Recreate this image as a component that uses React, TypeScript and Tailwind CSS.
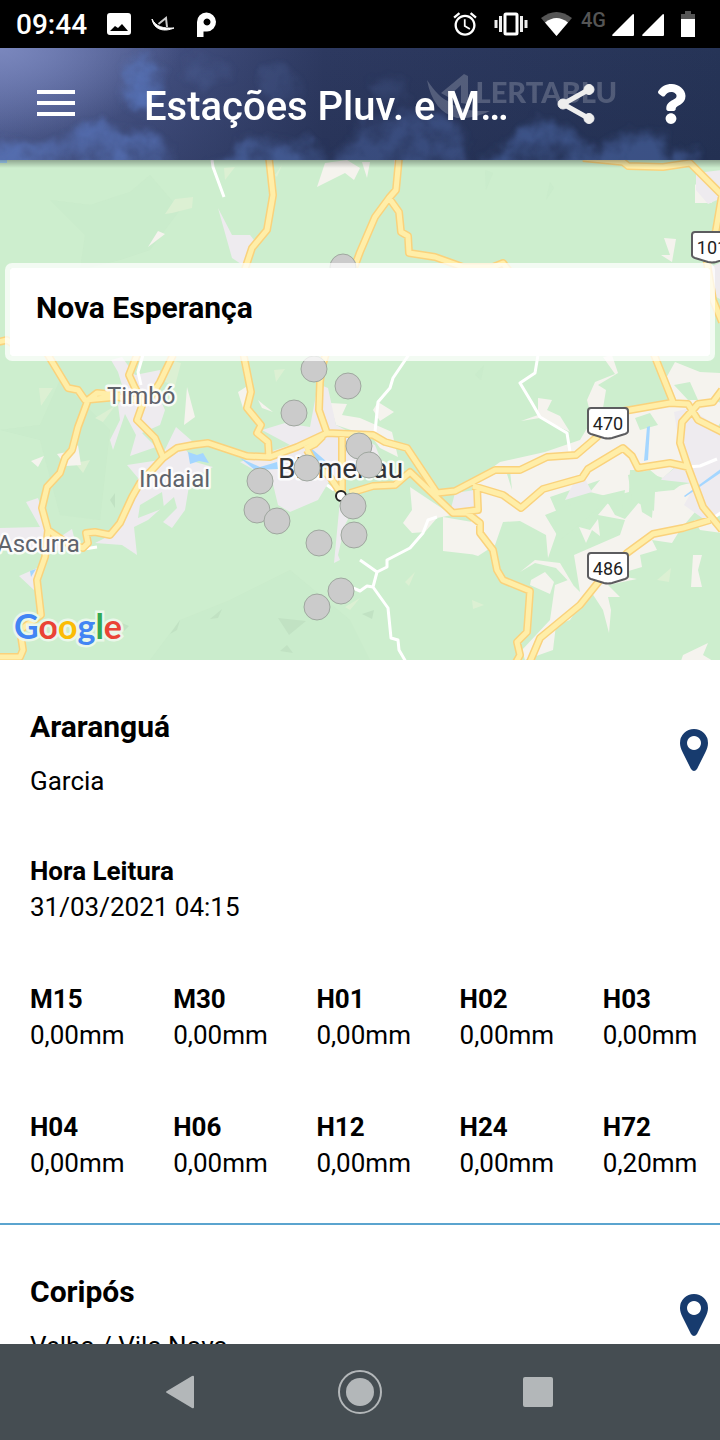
import { FaQuestion } from 'react-icons/fa'

interface Reading {
  label: string
  value: string
}

interface Station {
  name: string
  district: string
  readAt: string
  readings: Reading[]
}

const LABELS = ['M15', 'M30', 'H01', 'H02', 'H03', 'H04', 'H06', 'H12', 'H24', 'H72']

const STATIONS: Station[] = [
  {
    name: 'Araranguá',
    district: 'Garcia',
    readAt: '31/03/2021 04:15',
    readings: LABELS.map((label) => ({ label, value: label === 'H72' ? '0,20mm' : '0,00mm' })),
  },
  {
    name: 'Coripós',
    district: 'Velha / Vila Nova',
    readAt: '31/03/2021 04:15',
    readings: LABELS.map((label) => ({ label, value: '0,00mm' })),
  },
]

const MARKERS = [
  [343, 267], [314, 369], [348, 386], [294, 413], [359, 446],
  [369, 465], [307, 468], [260, 481], [257, 510], [277, 521],
  [353, 506], [354, 535], [319, 543], [341, 591], [317, 607],
]

const ROADS = [
  'M269 158 L273 195 L267 230 L252 248 L243 275 L241 340 L244 357 L251 392 L247 408 L261 425 L257 433 L268 442 L269 457',
  'M48 530 L67 543 L83 548 L88 543 L86 533 L95 532 L110 535 L120 523 L132 497 L140 483 L163 458 L177 448 L193 445 L208 443 L247 456 L270 457 L297 447 L327 433 L373 435 L385 442 L407 448 L437 493 L455 491 L495 470 L520 470 L547 457 L576 455 L597 437 L610 413 L630 410 L670 403 L688 404 L698 420 L722 432',
  'M655 357 L640 320 M655 357 L673 402',
  'M722 390 L713 402 L698 404 L682 422 L680 443 L688 467 L703 507 L722 530',
  'M473 486 L503 495 L521 508 L543 489 L582 478 L588 469 L623 448 L632 456 L638 468 L670 463 L688 467',
  'M477 487 L478 510 L453 513 L410 472 L395 485 L373 486 L350 493',
  'M453 513 L467 513 L480 523 L480 533 L493 550 L497 570 L503 580 L530 591 L527 632 L517 642 L520 655 L515 664',
  'M529 664 L540 638 L580 605 L600 580 L627 553 L653 534 L683 528 L710 520',
  'M307 450 L314 463 L330 477 L340 492 M342 433 L342 492 M323 436 L315 444 L305 449',
  'M399 158 L396 190 L389 198 L375 217 L360 252 L342 300 L322 367 L320 382 L319 410 L327 433',
  'M389 198 L399 212 L401 232 L408 236 L409 253 L435 257 L463 267 L493 267 L503 263 L512 275',
  'M583 158 L623 162 L628 166 L663 167 L690 163 L722 195 L716 230 L707 263 L713 300 L722 322',
  'M-2 342 L7 340 L25 352 L45 350 L68 388 L78 390 L85 400 L117 397 L143 401 M88 400 L97 393 L120 395',
  'M88 400 L78 427 L72 450 L65 458 L60 473 L47 487 L42 508 L48 530 L45 557 L37 580 L41 615 L20 630 L23 650 L20 657 L-2 657',
  'M137 355 L129 375 L135 388 L143 403 L137 420 L155 438 L163 457 M173 355 L160 382 L147 403',
].join(' ')

const LOCAL_ROADS = [
  'M212 160 L213 167 L224 197',
  'M412 350 L393 378 L390 388 L378 402 L375 432',
  'M538 355 L535 373 L520 383 L532 403 L540 417 L567 433 L570 452',
  'M437 517 L428 520 L423 533 L410 548 L387 560 L387 567 L377 572 L360 560',
  'M377 572 L373 587 L388 608 L391 638 L398 640 L399 650 L406 662 M373 587 L367 586 L360 591 L353 588',
  'M688 467 L700 466 L717 459 M710 520 L722 512 M143 355 L138 372 L141 385 M327 485 L334 490 M84 549 L97 547',
].join(' ')

// built-up areas, greyish lilac
const URBAN = [
  'M218 208 L232 235 L250 235 L254 240 L244 266 L232 258 Z',
  'M111 360 L122 357 L135 375 L160 370 L158 395 L165 410 L160 425 L142 433 L156 447 L130 456 L136 435 L125 414 L113 450 L110 440 L120 420 L118 405 L125 395 L118 372 Z',
  'M176 427 L192 441 L186 450 L195 462 L213 467 L190 480 L185 510 L172 528 L163 522 L177 508 L174 497 L148 520 L134 527 L137 555 L122 545 L95 543 L115 533 L133 497 L138 478 L127 465 L160 460 Z',
  'M0 528 L40 527 L26 502 L38 498 L44 515 L50 532 L64 550 L40 552 L0 550 Z',
  'M19 576 L37 568 L34 590 Z M60 537 L72 529 L76 545 Z',
  'M262 430 L285 423 L310 427 L318 384 L328 388 L336 425 L375 445 L385 470 L330 480 L318 500 L290 512 L278 505 L272 480 L240 462 L290 445 Z',
  'M340 500 L360 495 L345 525 L338 555 L340 560 L334 563 Z',
  'M575 480 L583 475 L592 492 L565 500 Z',
  'M674 412 L690 408 L722 430 L722 515 L705 520 L684 505 L695 485 L660 480 L682 462 Z',
  'M455 493 L475 490 L478 520 L450 512 Z',
  'M696 173 L722 170 L722 198 L708 204 L696 190 Z M708 268 L722 262 L722 300 L714 296 Z',
  'M394 160 L399 160 L394 178 Z',
].join(' ')

// sparse settlement, warm off-white
const SETTLED = [
  'M325 163 L347 160 L360 168 L354 180 L345 173 L317 187 Z M362 162 L370 162 L367 178 Z',
  'M148 247 L158 231 L165 234 Z M187 387 L195 417 L184 425 Z M31 461 L44 456 L38 467 Z M57 454 L72 451 L78 445 L81 465 L66 466 Z',
  'M238 392 L249 385 L253 400 L243 408 Z M258 400 L264 405 L273 412 L262 408 Z M330 403 L347 404 L342 415 L360 418 L392 432 L398 457 L380 448 L372 437 L336 425 Z',
  'M378 402 L394 412 L380 421 L373 410 Z M410 487 L452 515 L437 518 L425 532 L412 533 L403 523 L412 510 Z',
  'M443 517 L478 523 L490 540 L478 555 L443 551 Z',
  'M475 480 L500 462 L545 452 L580 440 L592 420 L587 400 L595 382 L615 374 L603 357 L612 355 L618 373 L598 385 L606 390 L603 408 L640 410 L670 400 L665 380 L675 362 L700 372 L722 373 L722 390 L712 400 L722 403 L722 420 L690 470 L675 467 L663 478 L640 470 L630 470 L629 492 L610 497 L590 492 L600 480 L550 497 L560 520 L556 535 L548 558 L546 535 L520 521 L503 522 L495 545 L478 556 L468 553 Z',
  'M598 515 L608 503 L615 515 L625 519 L640 501 L642 512 L652 518 L654 492 L674 490 L690 478 L705 500 L680 530 L672 543 L652 540 L657 550 L640 555 L642 567 L615 575 L637 579 L608 585 L620 597 L608 597 L611 610 L609 633 L603 610 L590 590 L570 620 L556 625 L553 650 L525 660 L522 650 L550 620 L555 585 L568 580 L580 592 L574 555 L620 535 L625 520 Z',
  'M579 527 L590 530 L598 519 L600 536 L592 530 L586 543 Z M531 580 L545 572 L554 582 L550 594 L530 585 Z M520 572 L535 560 L560 563 L575 588 L556 568 L535 563 Z',
  'M693 555 L702 555 L698 570 L702 587 L691 587 Z M695 185 L700 180 L712 203 L695 203 Z M664 238 L676 239 L672 262 L661 255 L670 255 Z',
  'M538 398 L552 400 L547 410 L560 416 L570 432 L540 418 L521 421 L538 415 Z M683 655 L708 643 L703 655 L718 664 L680 664 Z M694 520 L722 522 L722 533 L700 530 Z',
].join(' ')

// forest clearings inside the settled strip
const CLEARINGS = [
  'M635 418 L650 413 L658 425 L640 430 Z M628 475 L650 470 L662 480 L690 483 L655 492 L654 511 L632 500 Z',
  'M583 500 L625 490 L622 512 L605 502 L585 520 L560 540 L545 515 Z',
  'M674 385 L690 382 L698 400 L688 400 Z M140 505 L162 492 L164 508 L138 518 Z M510 470 L512 490 L507 474 Z',
].join(' ')

const SHADES = [
  'M50 200 L90 205 L130 192 L150 175 L180 210 L150 250 L120 260 L80 270 L85 235 Z',
  'M0 430 L40 425 L60 380 L110 430 L100 520 L60 515 L40 440 Z',
  'M180 620 L230 600 L290 570 L350 620 L370 660 L150 660 Z',
  'M485 170 L493 173 L486 190 Z M550 182 L554 188 L546 200 Z M475 375 L484 365 L481 380 Z',
].join(' ')

const DARK_SPOTS =
  'M110 500 L115 493 L115 508 Z M170 634 L180 620 L177 630 Z M210 619 L222 609 L218 618 Z M278 618 L306 621 L289 635 Z M122 623 L129 626 L124 631 Z M362 614 L374 610 L372 619 Z M280 651 L287 645 L293 653 Z'

const PALE_SPOTS =
  'M165 214 L175 199 L193 197 L192 208 L172 213 Z M224 168 L235 167 L225 180 Z M39 388 L53 388 L41 406 Z M95 418 L115 406 L103 422 Z M75 463 L90 460 L83 473 Z M274 370 L285 369 L276 382 Z M405 582 L415 572 L409 586 Z M657 580 L671 568 L669 582 Z M472 600 L484 605 L473 609 Z M345 607 L360 598 L350 610 Z M170 360 L181 363 L175 386 L165 382 Z M275 175 L282 165 L277 177 Z'

const WATER =
  'M188 452 L197 455 L203 453 L209 463 L199 461 L190 464 Z M240 458 L260 467 L277 462 L278 469 L255 470 Z M308 455 L312 449 L327 462 L328 470 Z M647 427 L650 426 L648 460 L644 461 Z M684 496 L722 468 L722 472 L685 497 Z M30 571 L36 569 L31 577 Z M0 160 H7 V163 H0 Z'

function StatusBar() {
  return (
    <div className="flex h-12 shrink-0 items-center bg-black pl-4 pr-[25px] text-white">
      <span className="w-[75px] pt-[2px] text-[28px] font-medium leading-[46px]">09:44</span>
      <svg className="ml-4 h-12 w-6" viewBox="107 0 24 48" fill="currentColor" aria-label="Imagem">
        <path
          fillRule="evenodd"
          d="M110 13h18a3 3 0 0 1 3 3v16a3 3 0 0 1-3 3h-18a3 3 0 0 1-3-3V16a3 3 0 0 1 3-3zm0 18h18l-6-7-4 4-3-2z"
        />
      </svg>
      <svg className="ml-5 h-12 w-6" viewBox="151 0 24 48" aria-label="AlertaBlu">
        <path d="M152 19c4 8 11 9.500 22 9c-9 4-20 2.500-22-9z" fill="white" stroke="white" />
        <path d="M158.500 24l7.500-6 1 9" fill="none" stroke="#ccc" strokeWidth="2" />
      </svg>
      <svg className="ml-[22px] h-12 w-5" viewBox="197 0 20 48" fill="currentColor" aria-label="P">
        <path
          fillRule="evenodd"
          d="M197 37V22a9.500 9.500 0 1 1 10 9.500h-3.500V37zm10-18.500a3.500 3.500 0 1 0 .01 0z"
        />
      </svg>

      <svg className="ml-auto h-12 w-6" viewBox="453 0 24 48" fill="currentColor" aria-label="Alarme">
        <path
          transform="translate(451 10) scale(1.17)"
          d="M22 5.720l-4.600-3.860-1.290 1.530 4.600 3.860L22 5.720zM7.880 3.390L6.600 1.860 2 5.710l1.290 1.530 4.590-3.850zM12.500 8H11v6l4.750 2.850.75-1.230-4-2.370V8zM12 4c-4.970 0-9 4.030-9 9s4.020 9 9 9c4.970 0 9-4.030 9-9s-4.030-9-9-9zm0 16c-3.870 0-7-3.130-7-7s3.130-7 7-7 7 3.130 7 7-3.130 7-7 7z"
        />
      </svg>
      <svg className="ml-[17px] h-12 w-[34px]" viewBox="494 0 34 48" aria-label="Vibrar">
        <rect x="505" y="14" width="12" height="20" rx="1" fill="none" stroke="white" strokeWidth="3" />
        <path d="M496 20v8M500.500 16v16M521.500 16v16M526 20v8" stroke="#eee" strokeWidth="3" />
      </svg>
      <svg className="ml-[13px] h-12 w-8" viewBox="541 0 32 48" aria-label="Wi-Fi">
        <path d="M541 18q15.500-12 31 0L556.500 36z" fill="#555" />
        <path d="M545 22.500q11.500-9 23 0L556.500 36z" fill="white" />
      </svg>
      <span className="mb-[9px] ml-2 w-[31px] text-[20px] font-medium leading-5 text-[#555]">4G</span>
      <svg className="h-12 w-[53px]" viewBox="612 0 53 48" fill="currentColor" aria-label="Sinal">
        <path d="M633 14q1 0 1 1v20q0 1-1 1h-20q-1.500-.5-.5-1.500zM663 14q1 0 1 1v20q0 1-1 1h-20q-1.500-.5-.5-1.500z" />
      </svg>
      <svg className="ml-4 h-12 w-[14px]" viewBox="681 0 14 48" aria-label="Bateria">
        <path d="M681 19v-5h4v-3h6v3h4v5z" fill="#555" />
        <path d="M681 19h14v18h-14z" fill="white" />
      </svg>
    </div>
  )
}

function HeaderSky() {
  return (
    <svg
      className="absolute inset-0 h-full w-full"
      viewBox="0 48 720 112"
      preserveAspectRatio="none"
      aria-hidden="true"
    >
      <defs>
        <linearGradient id="sky" x1="0" y1="0" x2="1" y2="0">
          <stop offset="0" stopColor="#5a68a0" />
          <stop offset="0.2" stopColor="#455284" />
          <stop offset="0.45" stopColor="#2d3960" />
          <stop offset="1" stopColor="#263457" />
        </linearGradient>
        <linearGradient id="dusk" x1="0" y1="0" x2="0" y2="1">
          <stop offset="0" stopColor="#1c2746" stopOpacity="0" />
          <stop offset="1" stopColor="#1c2746" stopOpacity="0.3" />
        </linearGradient>
        <radialGradient id="glow" cx="0" cy="0" r="1">
          <stop offset="0" stopColor="#7a87bd" />
          <stop offset="1" stopColor="#7a87bd" stopOpacity="0" />
        </radialGradient>
        <filter id="cloud" x="-5%" y="-30%" width="110%" height="160%">
          <feGaussianBlur in="SourceGraphic" stdDeviation="4" result="soft" />
          <feTurbulence type="fractalNoise" baseFrequency="0.035" numOctaves="4" seed="7" result="noise" />
          <feDisplacementMap in="soft" in2="noise" scale="28" xChannelSelector="R" yChannelSelector="G" result="puff" />
          <feColorMatrix in="noise" type="matrix" values="0 0 0 0 1  0 0 0 0 1  0 0 0 0 1  0 0 1.600 0 0" result="mask" />
          <feComposite in="puff" in2="mask" operator="in" />
          <feGaussianBlur stdDeviation="1" />
        </filter>
      </defs>
      <rect y="48" width="720" height="112" fill="url(#sky)" />
      <rect y="48" width="720" height="112" fill="url(#dusk)" />
      <rect y="48" width="180" height="90" fill="url(#glow)" />
      <g filter="url(#cloud)" fill="#5878bf">
        <path d="M-10 145 L20 138 L38 150 L60 142 L75 130 L92 126 L115 130 L135 128 L155 144 L170 152 L170 180 L-10 180 Z" opacity="0.7" />
        <ellipse cx="144" cy="82" rx="17" ry="27" opacity="0.8" />
        <ellipse cx="205" cy="72" rx="22" ry="16" opacity="0.18" />
        <ellipse cx="280" cy="86" rx="20" ry="18" opacity="0.18" />
        <path d="M200 170 L235 155 L250 140 L268 138 L285 146 L305 140 L325 150 L330 175 Z" opacity="0.5" />
        <path d="M330 175 L360 125 L395 112 L430 114 L462 124 L470 148 L455 180 L330 180 Z" opacity="0.36" />
        <path d="M480 175 L500 142 L530 130 L545 120 L570 130 L590 140 L600 180 L480 180 Z" opacity="0.46" />
        <path d="M590 175 L605 145 L625 132 L650 134 L668 130 L670 155 L655 175 Z" opacity="0.46" />
        <ellipse cx="390" cy="90" rx="20" ry="12" opacity="0.18" />
        <ellipse cx="686" cy="162" rx="14" ry="8" opacity="0.5" />
      </g>
    </svg>
  )
}

function AppHeader() {
  return (
    <header className="relative z-10 flex h-28 shrink-0 items-center overflow-hidden bg-[#303c65] pl-[37px] pr-[34px] text-white">
      <HeaderSky />
      <div className="absolute right-[103px] top-6 flex items-start text-white/20" aria-hidden="true">
        <svg className="h-12 w-16" viewBox="428 72 64 48" fill="currentColor">
          <path d="M428 80 Q440 98 449 101 Q460 112 491 111 Q475 119 458 118 Q434 112 428 80 Z" />
          <path d="M442 93 L465 74 L469 76 L469 104 L462 103 L462 85 L449 97 Z" />
        </svg>
        <span className="-ml-[15px] font-[Lato] text-[29px] font-black leading-10">LERTABLU</span>
      </div>
      <button type="button" aria-label="Menu" className="relative flex w-[38px] flex-col gap-[7px] pb-[2px]">
        <span className="h-1 w-full bg-white" />
        <span className="h-1 w-full bg-white" />
        <span className="h-1 w-full bg-white" />
      </button>
      <h1 className="relative ml-[69px] min-w-0 flex-1 truncate pt-[6px] text-[40px] font-medium leading-[52px]">
        Estações Pluv. e M…
      </h1>
      <button type="button" aria-label="Compartilhar" className="relative">
        <svg className="h-10 w-[38px]" viewBox="557 84 38 40" fill="#eee" stroke="#eee">
          <path d="M589 89.500L563 104l26 14.500" fill="none" strokeWidth="5" />
          <circle cx="589" cy="89.500" r="5" />
          <circle cx="563" cy="104" r="5" />
          <circle cx="589" cy="118.500" r="5" />
        </svg>
      </button>
      <button type="button" aria-label="Ajuda" className="relative ml-[61px]">
        <FaQuestion className="h-10 w-[30px]" />
      </button>
    </header>
  )
}

function RouteShield({ x, y, number }: { x: number; y: number; number: string }) {
  return (
    <g transform={`translate(${x} ${y})`}>
      <path
        d="M-17 -15 H17 Q20 -15 20 -12 V8 Q20 10 17 11 L4 15 Q0 16 -4 15 L-17 11 Q-20 10 -20 8 V-12 Q-20 -15 -17 -15 Z"
        fill="white"
        stroke="#5c5c5f"
        strokeWidth="2"
      />
      <text y="7" textAnchor="middle" fontSize="18" fill="#222">
        {number}
      </text>
    </g>
  )
}

function StationMap() {
  return (
    <section aria-label="Mapa das estações" className="relative h-[500px] shrink-0 overflow-hidden bg-[#cdeece]">
      <svg
        className="h-full w-full"
        viewBox="0 160 720 500"
        preserveAspectRatio="xMidYMid slice"
        fontFamily="Roboto, sans-serif"
      >
        <path d={SHADES} fill="#c8e9c9" opacity="0.5" />
        <path d={DARK_SPOTS} fill="#c1e2c3" />
        <path d={PALE_SPOTS} fill="#dcf0d3" />
        <path d={SETTLED} fill="#f5f3ee" />
        <path d={URBAN} fill="#eeebef" />
        <path d={CLEARINGS} fill="#cdeece" />
        <path d={WATER} fill="#a4d6ff" />
        <path d={LOCAL_ROADS} fill="none" stroke="white" strokeWidth="3" strokeLinejoin="round" />
        <path d={ROADS} fill="none" stroke="#fad27c" strokeWidth="8" strokeLinejoin="round" />
        <path d={ROADS} fill="none" stroke="#ffeea8" strokeWidth="5" strokeLinejoin="round" />

        <RouteShield x={608} y={423} number="470" />
        <RouteShield x={608} y={568} number="486" />
        <RouteShield x={712} y={247} number="101" />

        <g fill="#5f636b" stroke="white" strokeOpacity="0.85" strokeWidth="5" strokeLinejoin="round" paintOrder="stroke">
          <text x="107" y="404" fontSize="24">Timbó</text>
          <text x="139" y="487" fontSize="24">Indaial</text>
          <text x="-3" y="552" fontSize="24">Ascurra</text>
          <text x="278" y="478" fontSize="28" fill="#303236">Blumenau</text>
        </g>
        <circle cx="341" cy="496" r="5" fill="white" stroke="#222" strokeWidth="2" />

        {MARKERS.map(([cx, cy]) => (
          <circle key={`${cx}-${cy}`} cx={cx} cy={cy} r="13" fill="#cbcbcb" stroke="#9fa79f" />
        ))}
      </svg>

      <p className="absolute bottom-[14px] left-[14px] font-[Lato] text-[34px] font-bold leading-10 [paint-order:stroke] [-webkit-text-stroke:5px_#eaf7ea]">
        <span className="text-[#4285f4]">G</span>
        <span className="text-[#ea4335]">o</span>
        <span className="text-[#fbbc05]">o</span>
        <span className="text-[#4285f4]">g</span>
        <span className="text-[#34a853]">l</span>
        <span className="text-[#ea4335]">e</span>
      </p>

      <div className="absolute inset-x-0 top-0 h-2 bg-gradient-to-b from-black/30 to-transparent" />

      <div className="absolute inset-x-[5px] top-[103px] h-[98px] rounded-[7px] border-[5px] border-white/75 bg-white bg-clip-padding pl-[26px] pt-[22px]">
        <h2 className="text-[30px] font-bold leading-9 text-black">Nova Esperança</h2>
      </div>
    </section>
  )
}

function StationCard({ station }: { station: Station }) {
  return (
    <article className="border-b-2 border-[#5ba4cf] pb-[42px] pt-[49px] text-[26px] leading-9 text-black">
      <div className="flex items-start justify-between pl-[30px] pr-3">
        <div>
          <h2 className="text-[30px] font-bold leading-9">{station.name}</h2>
          <p className="mt-[18px]">{station.district}</p>
        </div>
        <button type="button" aria-label={`Ver ${station.name} no mapa`} className="mt-5">
          <svg className="h-[42px] w-7" viewBox="0 0 28 42" fill="#173b6e">
            <path
              fillRule="evenodd"
              d="M14 0a14 14 0 0 1 14 14c0 3-1 6-2.500 9L17 40q-3 4-6 0L2.500 23C1 20 0 17 0 14A14 14 0 0 1 14 0zm0 7a7 7 0 1 0 .01 0z"
            />
          </svg>
        </button>
      </div>
      <dl className="mt-[54px] pl-[30px]">
        <dt className="font-bold">Hora Leitura</dt>
        <dd>{station.readAt}</dd>
      </dl>
      <dl className="mt-14 grid grid-cols-5 gap-y-14 pr-1">
        {station.readings.map((reading) => (
          <div key={reading.label} className="min-w-0 pl-[30px]">
            <dt className="font-bold">{reading.label}</dt>
            <dd>{reading.value}</dd>
          </div>
        ))}
      </dl>
    </article>
  )
}

function NavigationBar() {
  return (
    <nav className="grid h-24 shrink-0 grid-cols-3 place-items-center bg-[#454d52] px-[90px] text-[#b3b7b9]">
      <button type="button" aria-label="Voltar">
        <svg className="h-11 w-11" viewBox="0 0 44 44" fill="currentColor">
          <path d="M34 6q2-1 2 1v30q0 2-2 1L9 23q-2-1 0-2z" />
        </svg>
      </button>
      <button type="button" aria-label="Início">
        <svg className="h-11 w-11" viewBox="0 0 44 44" fill="currentColor">
          <circle cx="22" cy="22" r="21" fill="none" stroke="currentColor" strokeWidth="2" />
          <circle cx="22" cy="22" r="14" />
        </svg>
      </button>
      <button type="button" aria-label="Recentes">
        <svg className="h-11 w-11" viewBox="0 0 44 44" fill="currentColor">
          <rect x="5" y="7" width="30" height="30" rx="2" />
        </svg>
      </button>
    </nav>
  )
}

export default function App() {
  return (
    <div className="flex h-screen flex-col overflow-hidden bg-white font-[Roboto,sans-serif]">
      <StatusBar />
      <AppHeader />
      <StationMap />
      <main className="min-h-0 flex-1 overflow-hidden">
        {STATIONS.map((station) => (
          <StationCard key={station.name} station={station} />
        ))}
      </main>
      <NavigationBar />
    </div>
  )
}
